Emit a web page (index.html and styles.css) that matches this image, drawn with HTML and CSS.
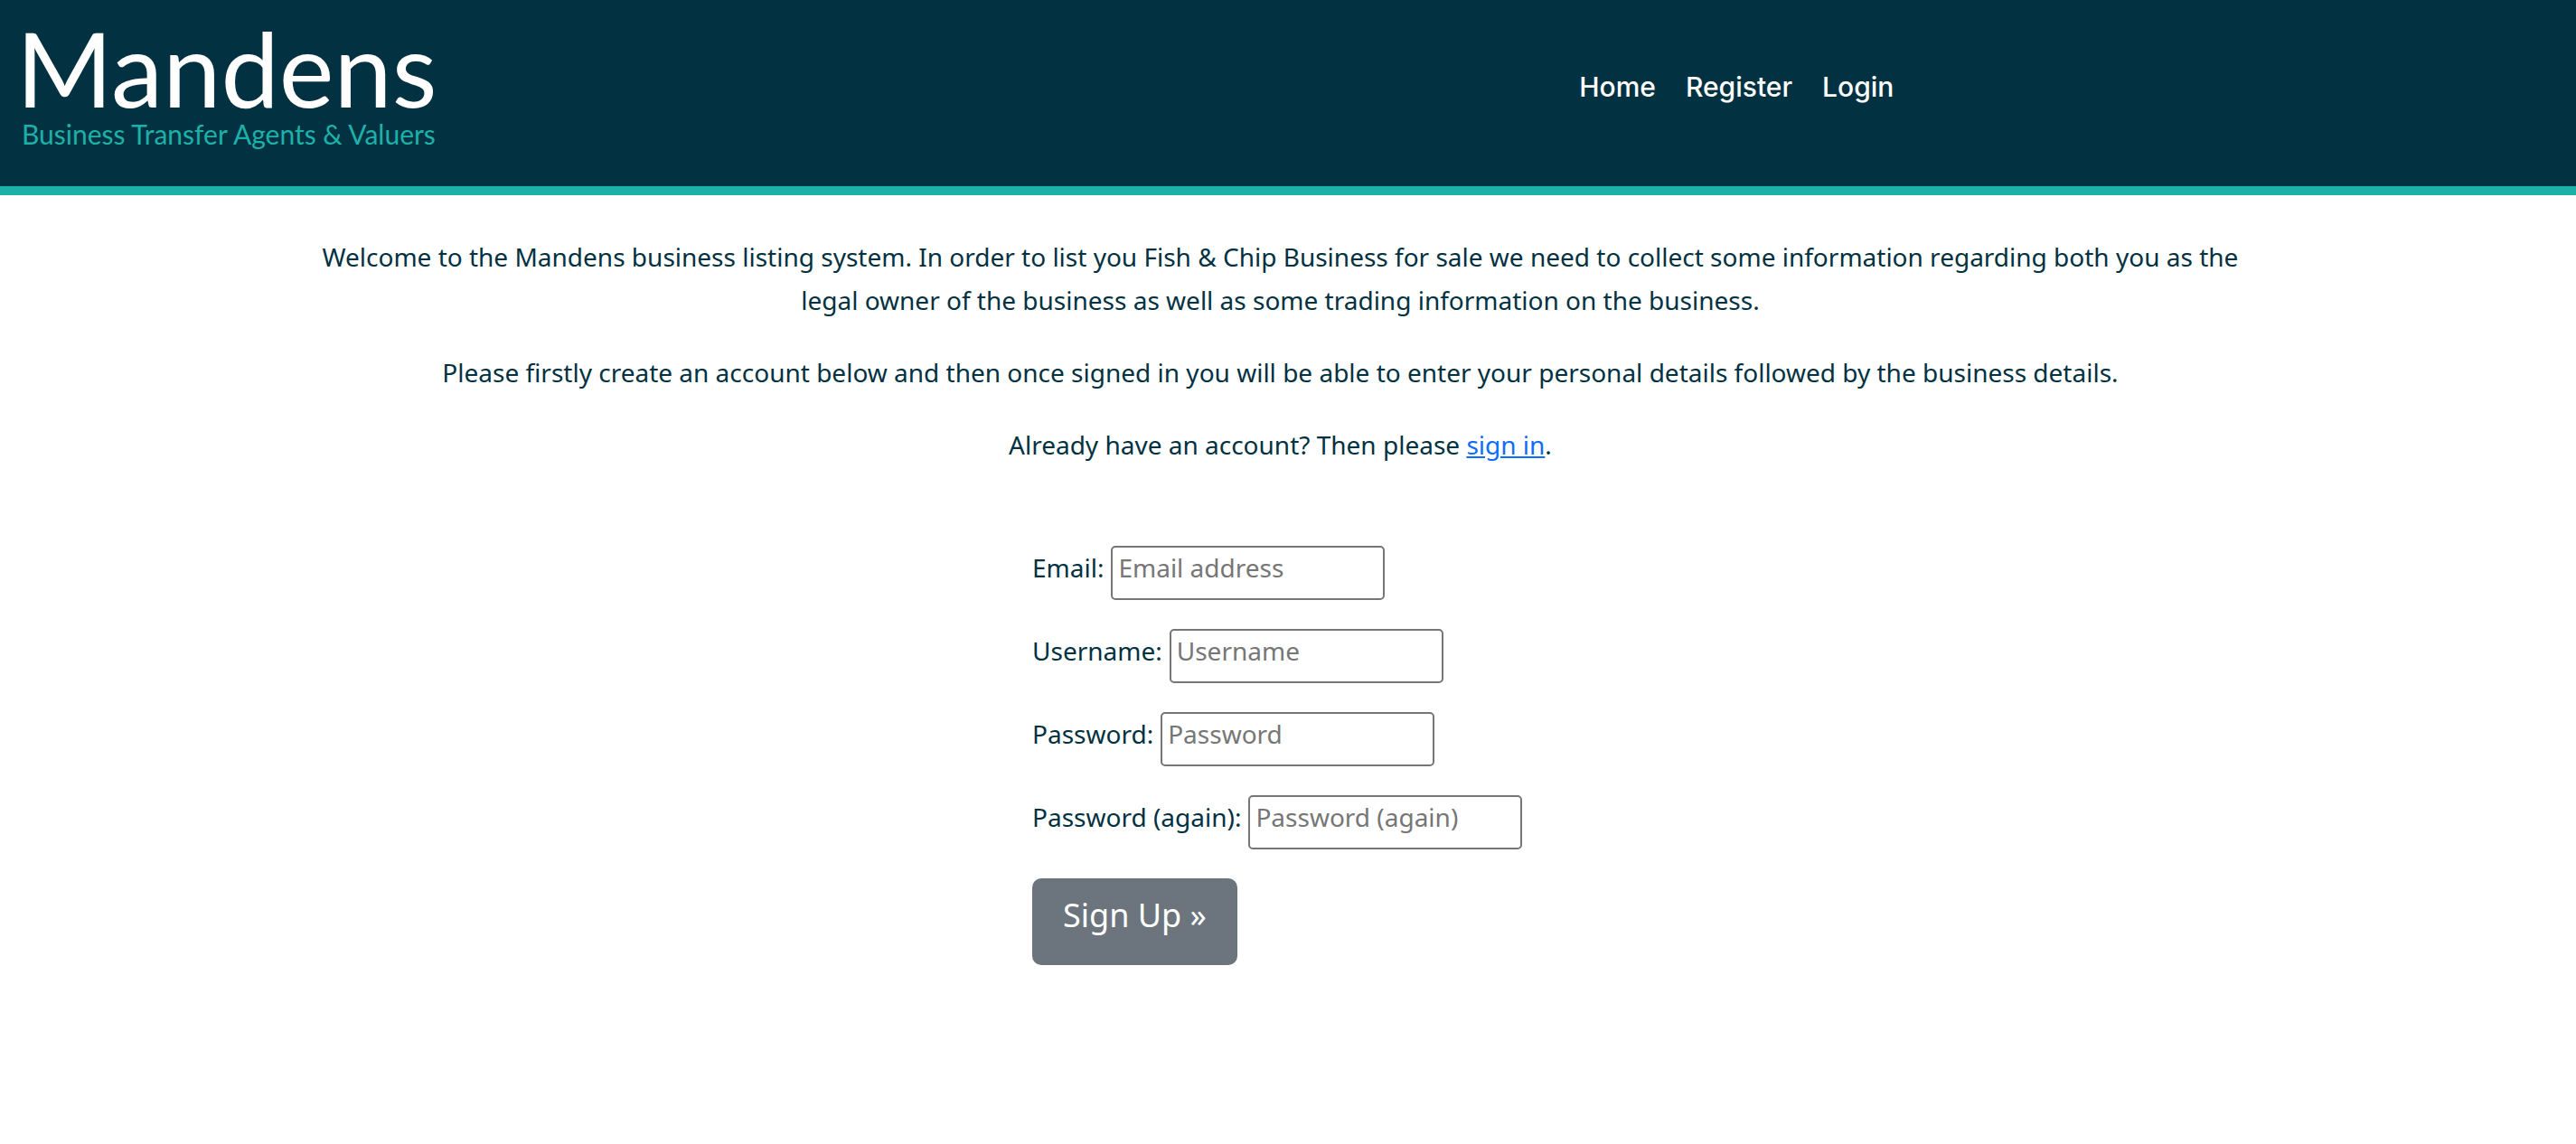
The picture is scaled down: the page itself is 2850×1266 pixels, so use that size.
FILE: index.html
```
<!DOCTYPE html>
<html lang="en">
<head>
<meta charset="utf-8">
<meta name="viewport" content="width=device-width, initial-scale=1">
<title>Mandens - Sign Up</title>
<link rel="stylesheet" href="styles.css">
</head>
<body>
<header class="site-header">
  <a class="brand" href="#">
    <span class="brand-name">Mandens</span>
    <span class="brand-tagline">Business Transfer Agents &amp; Valuers</span>
  </a>
  <nav class="site-nav">
    <a href="#">Home</a>
    <a href="#">Register</a>
    <a href="#">Login</a>
  </nav>
</header>
<main class="content">
  <section class="intro">
    <p>Welcome to the Mandens business listing system. In order to list you Fish &amp; Chip Business for sale we need to collect some information regarding both you as the legal owner of the business as well as some trading information on the business.</p>
    <p>Please firstly create an account below and then once signed in you will be able to enter your personal details followed by the business details.</p>
    <p>Already have an account? Then please <a href="#">sign in</a>.</p>
  </section>
  <form class="signup">
    <div class="field">
      <label for="email">Email:</label>
      <input id="email" type="email" placeholder="Email address">
    </div>
    <div class="field">
      <label for="username">Username:</label>
      <input id="username" type="text" placeholder="Username">
    </div>
    <div class="field">
      <label for="password1">Password:</label>
      <input id="password1" type="password" placeholder="Password">
    </div>
    <div class="field">
      <label for="password2">Password (again):</label>
      <input id="password2" type="password" placeholder="Password (again)">
    </div>
    <button class="submit" type="submit">Sign Up »</button>
  </form>
</main>
</body>
</html>
```
FILE: styles.css
```
* {
  box-sizing: border-box;
}

body {
  margin: 0;
  background: #fff;
  color: #023142;
  font: 28px/48px "Noto Sans", sans-serif;
}

.site-header {
  display: grid;
  grid-template-columns: 61.5% 1fr;
  align-items: start;
  padding: 14px 24px 44px;
  background: #023142;
  border-bottom: 10px solid #1cb1a8;
}

.brand {
  display: flex;
  flex-direction: column;
  justify-self: start;
  font-family: Lato, sans-serif;
  text-decoration: none;
}

.brand-name {
  color: #fff;
  font-size: 115px;
  line-height: 120px;
  margin-left: -6px;
}

.brand-tagline {
  color: #1cb1a8;
  font-size: 30px;
  line-height: 28px;
}

.site-nav {
  display: flex;
  gap: 33px;
  padding-top: 58px;
}

.site-nav a {
  color: #fff;
  font: 500 30px/48px Inter, sans-serif;
  text-decoration: none;
}

.content {
  padding-top: 44px;
}

.intro {
  margin: 0 12.3% 88px 11.7%;
  text-align: center;
}

.intro p {
  margin: 0 0 32px;
}

.intro p:last-child {
  margin-bottom: 0;
}

.intro a {
  color: #0d6efd;
}

.signup {
  display: flex;
  flex-direction: column;
  align-items: flex-start;
  gap: 32px;
  margin-left: 40%;
  padding: 0 2px 40px;
}

.field {
  display: flex;
  align-items: baseline;
  gap: 8px;
}

.field input {
  width: 303px;
  height: 60px;
  padding: 3px 6px 15px;
  border: 2px solid #767676;
  border-radius: 5px;
  background: #fff;
  color: #023142;
  font: inherit;
  line-height: 38px;
}

.field input::placeholder {
  color: #767676;
}

.submit {
  padding: 17px 34px 31px;
  border: 0;
  border-radius: 10px;
  background: #6c757d;
  color: #fff;
  font: 36px/48px "Noto Sans", sans-serif;
}
```
